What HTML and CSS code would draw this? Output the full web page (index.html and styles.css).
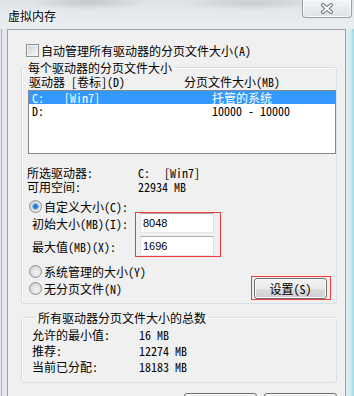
FILE: index.html
```html
<!doctype html>
<html>
  <head>
    <title>虚拟内存</title>
    <link rel="stylesheet" href="styles.css">
  </head>
  <body>
    <div class="window">
      <div class="titlebar">
        <span class="title">虚拟内存</span>
        <div class="close-btn">
          <svg width="14" height="11" viewBox="0 0 14 11">
            <path d="M3 2 L11 9 M11 2 L3 9" stroke="#6d7278" stroke-width="4" stroke-linecap="round" />
            <path d="M3 2 L11 9 M11 2 L3 9" stroke="#ffffff" stroke-width="2" stroke-linecap="round" />
          </svg>
        </div>
      </div>
      <div class="frame">
        <div class="client">
          <label class="check-row">
            <span class="checkbox"></span>
            <span>自动管理所有驱动器的分页文件大小(A)</span>
          </label>

          <fieldset class="group group-drives">
            <legend>每个驱动器的分页文件大小</legend>
            <div class="list-header">
              <span class="col-drive">驱动器 [卷标](D)</span>
              <span>分页文件大小(MB)</span>
            </div>
            <div class="listbox">
              <div class="list-row selected">
                <span class="col-letter">C:</span>
                <span class="col-label">[Win7]</span>
                <span>托管的系统</span>
              </div>
              <div class="list-row">
                <span class="col-letter">D:</span>
                <span class="col-label"></span>
                <span>10000 - 10000</span>
              </div>
            </div>

            <div class="info">
              <div class="info-row">
                <span class="info-key">所选驱动器:</span>
                <span class="info-letter">C:</span>
                <span>[Win7]</span>
              </div>
              <div class="info-row">
                <span class="info-key">可用空间:</span>
                <span>22934 MB</span>
              </div>
            </div>

            <label class="radio-row radio-custom">
              <span class="radio checked"></span>
              <span>自定义大小(C):</span>
            </label>

            <div class="size-fields">
              <div class="size-labels">
                <div class="size-label">初始大小(MB)(I):</div>
                <div class="size-label">最大值(MB)(X):</div>
              </div>
              <div class="size-inputs mark">
                <input type="text" value="8048" />
                <input type="text" value="1696" />
              </div>
            </div>

            <div class="options">
              <div class="option-list">
                <label class="radio-row">
                  <span class="radio"></span>
                  <span>系统管理的大小(Y)</span>
                </label>
                <label class="radio-row">
                  <span class="radio"></span>
                  <span>无分页文件(N)</span>
                </label>
              </div>
              <div class="set-wrap mark">
                <button class="set-btn">设置(S)</button>
              </div>
            </div>
          </fieldset>

          <fieldset class="group group-total">
            <legend>所有驱动器分页文件大小的总数</legend>
            <div class="total-row">
              <span class="total-key">允许的最小值:</span>
              <span>16 MB</span>
            </div>
            <div class="total-row">
              <span class="total-key">推荐:</span>
              <span>12274 MB</span>
            </div>
            <div class="total-row">
              <span class="total-key">当前已分配:</span>
              <span>18183 MB</span>
            </div>
          </fieldset>

          <div class="button-container">
            <button>确定</button>
            <button>取消</button>
          </div>
        </div>
      </div>
    </div>
  </body>
</html>
```

FILE: styles.css
```css
:root {
  --client-bg: #f0f0f0;
  --group-border: #d5dfe5;
  --list-border: #828790;
  --highlight: #3399ff;
  --mark: #ee3b3b;
  --control-border: #8e8f8f;
}

body {
  margin: 0;
  width: 354px;
  height: 396px;
  overflow: hidden;
  font-family: "Noto Sans Mono CJK SC", "Noto Sans CJK SC", sans-serif;
  font-size: 12px;
  color: #000000;
  background: #e4e8ec;
}

.window {
  display: flex;
  flex-direction: column;
  height: 396px;
  overflow: hidden;
}

.titlebar {
  flex-shrink: 0;
  height: 29px;
  display: flex;
  justify-content: space-between;
  align-items: flex-start;
  padding-left: 8px;
  background:
    radial-gradient(ellipse 60px 8px at 90px 2px, #c4c8cc, transparent),
    radial-gradient(ellipse 70px 7px at 250px 3px, #c8ccd0, transparent),
    linear-gradient(#dfe3e7, #eceff2);
}

.title {
  line-height: 13px;
  margin-top: 9px;
  font-family: "Noto Sans CJK SC", sans-serif;
  text-shadow: 0 0 6px #ffffff, 0 0 3px #ffffff;
}

.close-btn {
  width: 50px;
  height: 18px;
  margin-right: 2px;
  box-sizing: border-box;
  border: 1px solid #98a0a8;
  border-top: none;
  border-radius: 0 0 4px 4px;
  display: flex;
  align-items: center;
  justify-content: center;
  background: linear-gradient(#f3f5f7, #dde2e7);
  box-shadow: inset 0 0 0 1px #f8f9fa;
}

.frame {
  flex: 1;
  min-height: 0;
  overflow: hidden;
  display: flex;
  margin-left: 1px;
  padding: 0 8px 0 5px;
  border-left: 1px solid #a9b0b8;
  background: linear-gradient(to right, #e4e8ec 0, #e4e8ec 344px, #d4eef2 348px, #9fd6df 352px);
}

.client {
  flex: 1;
  border: 1px solid #9aa3ac;
  border-bottom: none;
  background: var(--client-bg);
  padding-top: 14px;
}

.check-row {
  display: flex;
  align-items: center;
  gap: 2px;
  padding-left: 18px;
  height: 13px;
  line-height: 13px;
}

.checkbox {
  width: 13px;
  height: 13px;
  box-sizing: border-box;
  border: 1px solid var(--control-border);
  background: linear-gradient(135deg, #cfd2d6, #f6f6f6);
  box-shadow: inset 0 0 0 1px #f4f4f4;
}

.group {
  margin: 4px 8px 0 13px;
  padding: 0;
  border: 1px solid var(--group-border);
  border-radius: 3px;
  min-width: 0;
  box-shadow: inset 1px 1px 0 #ffffff;
}

.group legend {
  margin-left: 4px;
  padding: 0 2px;
  line-height: 13px;
}

.list-header {
  display: flex;
  padding-left: 7px;
  margin-top: 1px;
  line-height: 13px;
}

.col-drive {
  width: 155px;
}

.listbox {
  margin: 2px 0 0 6px;
  height: 62px;
  border: 1px solid var(--list-border);
  background: #ffffff;
}

.list-row {
  display: flex;
  line-height: 13px;
  padding-left: 3px;
}

.list-row.selected {
  background: var(--highlight);
  color: #ffffff;
}

.col-letter {
  width: 32px;
}

.col-label {
  width: 148px;
}

.info {
  margin-top: 12px;
  padding-left: 5px;
}

.info-row {
  display: flex;
  line-height: 14px;
}

.info-key {
  width: 111px;
}

.info-letter {
  width: 26px;
}

.radio-row {
  display: flex;
  align-items: center;
  gap: 2px;
  padding-left: 7px;
  line-height: 13px;
}

.radio-custom {
  margin-top: 6px;
}

.radio {
  width: 13px;
  height: 13px;
  box-sizing: border-box;
  border: 1px solid var(--control-border);
  border-radius: 50%;
  background: radial-gradient(circle at 60% 60%, #f6f6f6 0, #dcdcdc 60%, #c8c8c8 100%);
}

.radio.checked {
  background:
    radial-gradient(circle at 50% 50%, #1f5da6 0, #3e8ad8 2px, #6fb7ef 3px, transparent 3.5px),
    radial-gradient(circle at 60% 60%, #f6f6f6 0, #dcdcdc 60%, #c8c8c8 100%);
}

.size-fields {
  display: flex;
  margin-top: -1px;
}

.size-labels {
  width: 103px;
  padding: 5px 0 0 10px;
}

.size-label {
  line-height: 13px;
}

.size-label + .size-label {
  margin-top: 10px;
}

.mark {
  border: 1px solid var(--mark);
}

.size-inputs {
  display: flex;
  flex-direction: column;
  gap: 3px;
  padding: 0 6px 0 4px;
}

.size-inputs input {
  width: 74px;
  height: 20px;
  box-sizing: border-box;
  margin: 0;
  padding: 0 0 0 2px;
  border: 1px solid;
  border-color: #abadb3 #dbdfe6 #e3e9ef #e2e3ea;
  font-family: "Liberation Sans", sans-serif;
  font-size: 11px;
  color: #000000;
  background: #ffffff;
  outline: none;
}

.options {
  display: flex;
  justify-content: space-between;
  align-items: flex-start;
  padding-bottom: 3px;
}

.option-list {
  display: flex;
  flex-direction: column;
  gap: 4px;
  padding-top: 8px;
}

.set-wrap {
  margin: 19px 5px 0 0;
  padding: 1px 3px 0 2px;
  height: 21px;
}

button {
  height: 21px;
  width: 73px;
  padding: 0;
  border: 1px solid #707070;
  border-radius: 3px;
  background: linear-gradient(#f2f2f2 0%, #ebebeb 50%, #dddddd 50%, #cfcfcf 100%);
  box-shadow: inset 0 0 0 1px #fbfbfb;
  font-family: "Noto Sans Mono CJK SC", "Noto Sans CJK SC", sans-serif;
  font-size: 12px;
  color: #000000;
}

.group-total {
  margin-top: 7px;
  padding: 3px 0 7px 10px;
}

.total-row {
  display: flex;
  line-height: 16px;
}

.total-key {
  width: 107px;
}

.button-container {
  display: flex;
  justify-content: flex-end;
  gap: 7px;
  margin: 10px 8px 0 0;
}

.button-container button {
  height: 23px;
}
```
